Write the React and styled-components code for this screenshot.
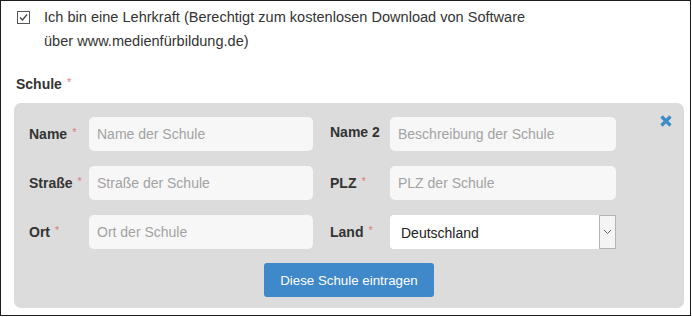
import styled, { createGlobalStyle } from 'styled-components';

const GlobalStyle = createGlobalStyle`
  body {
    margin: 0;
    background: #ffffff;
    font-family: 'Liberation Sans', Arial, sans-serif;
    color: #333333;
  }
`;

const Frame = styled.div`
  width: 691px;
  height: 316px;
  box-sizing: border-box;
  border: 1px solid #1c1c1c;
  padding: 4px 6px 0 13px;
  overflow: hidden;
`;

const CheckLine = styled.label`
  display: flex;
  align-items: flex-start;
  gap: 14px;
  padding-left: 3px;
  font-size: 14.55px;
  line-height: 24px;
  color: #333;
`;

const Box = styled.span`
  flex: none;
  width: 13px;
  height: 13px;
  margin-top: 6px;
  box-sizing: border-box;
  border: 1px solid #555;
  background: #fff;
  display: flex;
  align-items: center;
  justify-content: center;
`;

const Heading = styled.div`
  margin: 19px 0 9px 2px;
  font-size: 14px;
  line-height: 20px;
  font-weight: bold;
  color: #333;
`;

const Star = styled.span`
  color: #e07b7b;
  font-weight: normal;
  font-size: 11px;
  margin-left: 5px;
  vertical-align: 3px;
`;

const Panel = styled.div`
  position: relative;
  width: 670px;
  height: 205px;
  box-sizing: border-box;
  background: #dcdcdc;
  border-radius: 7px;
  padding: 14px 15px 10px 15px;
`;

const Close = styled.button`
  position: absolute;
  top: 11px;
  right: 11px;
  width: 14px;
  height: 14px;
  padding: 0;
  border: 0;
  background: none;
  display: flex;
`;

const Grid = styled.div`
  display: grid;
  grid-template-columns: 284px 286px;
  column-gap: 17px;
  row-gap: 15px;
`;

const Field = styled.div`
  display: flex;
  align-items: flex-start;
`;

const Label = styled.span`
  flex: none;
  width: 60px;
  padding-top: 7px;
  font-size: 14px;
  line-height: 16px;
  font-weight: bold;
  color: #333;
  white-space: nowrap;
`;

const Input = styled.input`
  flex: 1;
  min-width: 0;
  height: 34px;
  box-sizing: border-box;
  border: 0;
  border-radius: 5px;
  background: #f7f7f7;
  padding: 0 8px;
  font-family: 'Liberation Sans', Arial, sans-serif;
  font-size: 14px;
  color: #333;
  outline: none;
  &::placeholder {
    color: #a3a3a3;
  }
`;

const Select = styled.div`
  flex: 1;
  height: 34px;
  display: flex;
  background: #ffffff;
  border-radius: 4px 0 0 4px;
  font-size: 14px;
  color: #222;
`;

const SelectValue = styled.span`
  flex: 1;
  padding-left: 11px;
  line-height: 36px;
`;

const Arrow = styled.span`
  flex: none;
  width: 17px;
  box-sizing: border-box;
  border: 1px solid #b4b4b4;
  background: #f4f4f4;
  display: flex;
  align-items: center;
  justify-content: center;
`;

const Actions = styled.div`
  display: flex;
  justify-content: center;
  margin-top: 14px;
`;

const Button = styled.button`
  height: 34px;
  padding: 0 16px;
  border: 0;
  border-radius: 3px;
  background: #3f88c9;
  color: #fff;
  font-family: 'Liberation Sans', Arial, sans-serif;
  font-size: 13.3px;
`;

function Req() {
  return <Star>*</Star>;
}

export default function App() {
  return (
    <Frame>
      <GlobalStyle />
      <CheckLine>
        <Box>
          <svg width="11" height="11" viewBox="0 0 11 11">
            <path d="M2 5.5 L4.5 8 L9 2.5" fill="none" stroke="#444" strokeWidth="1.3" />
          </svg>
        </Box>
        <span>
          Ich bin eine Lehrkraft (Berechtigt zum kostenlosen Download von Software
          <br />
          über www.medienfürbildung.de)
        </span>
      </CheckLine>

      <Heading>Schule<Req /></Heading>

      <Panel>
        <Close aria-label="Schließen">
          <svg width="14" height="14" viewBox="0 0 14 14">
            <path d="M2.5 2.5 L11.5 11.5 M11.5 2.5 L2.5 11.5" stroke="#3a8cc6" strokeWidth="3.2" />
          </svg>
        </Close>
        <Grid>
          <Field>
            <Label>Name<Req /></Label>
            <Input placeholder="Name der Schule" />
          </Field>
          <Field>
            <Label>Name 2</Label>
            <Input placeholder="Beschreibung der Schule" />
          </Field>
          <Field>
            <Label>Straße<Req /></Label>
            <Input placeholder="Straße der Schule" />
          </Field>
          <Field>
            <Label>PLZ<Req /></Label>
            <Input placeholder="PLZ der Schule" />
          </Field>
          <Field>
            <Label>Ort<Req /></Label>
            <Input placeholder="Ort der Schule" />
          </Field>
          <Field>
            <Label>Land<Req /></Label>
            <Select>
              <SelectValue>Deutschland</SelectValue>
              <Arrow>
                <svg width="9" height="6" viewBox="0 0 9 6">
                  <path d="M1 1 L4.5 4.5 L8 1" fill="none" stroke="#666" strokeWidth="1" />
                </svg>
              </Arrow>
            </Select>
          </Field>
        </Grid>
        <Actions>
          <Button>Diese Schule eintragen</Button>
        </Actions>
      </Panel>
    </Frame>
  );
}
